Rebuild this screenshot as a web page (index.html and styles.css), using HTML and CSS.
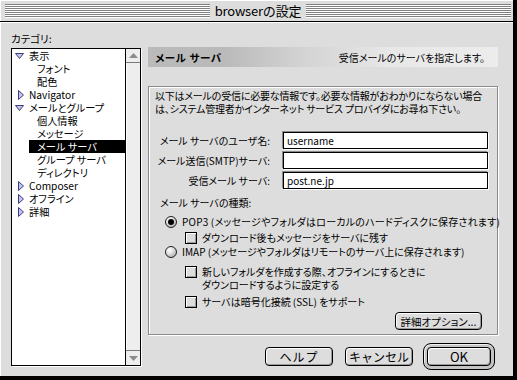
FILE: index.html
```html
<!DOCTYPE html>
<html lang="ja">
<head>
<meta charset="utf-8">
<title>browserの設定</title>
<link rel="stylesheet" href="styles.css">
</head>
<body>
<div class="window">
  <div class="titlebar">
    <div class="stripes"></div>
    <div class="title">browserの設定</div>
    <div class="stripes"></div>
  </div>
  <div class="content">
    <div class="left">
      <div class="cat-label">カテゴリ:</div>
      <div class="listbox">
        <div class="tree">
          <div class="row l0"><svg class="tri" width="10" height="10" viewBox="0 0 10 10"><polygon points="0.5,2.5 8.5,2.5 4.5,7.5"/></svg><span class="txt">表示</span></div>
          <div class="row l1"><span class="txt">フォント</span></div>
          <div class="row l1"><span class="txt">配色</span></div>
          <div class="row l0"><svg class="tri" width="10" height="10" viewBox="0 0 10 10"><polygon points="3.5,0.5 8.5,5 3.5,9.5"/></svg><span class="txt">Navigator</span></div>
          <div class="row l0"><svg class="tri" width="10" height="10" viewBox="0 0 10 10"><polygon points="0.5,2.5 8.5,2.5 4.5,7.5"/></svg><span class="txt">メールとグループ</span></div>
          <div class="row l1"><span class="txt">個人情報</span></div>
          <div class="row l1"><span class="txt">メッセージ</span></div>
          <div class="row l1 selected"><span class="txt">メール サーバ</span></div>
          <div class="row l1"><span class="txt">グループ サーバ</span></div>
          <div class="row l1"><span class="txt">ディレクトリ</span></div>
          <div class="row l0"><svg class="tri" width="10" height="10" viewBox="0 0 10 10"><polygon points="3.5,0.5 8.5,5 3.5,9.5"/></svg><span class="txt">Composer</span></div>
          <div class="row l0"><svg class="tri" width="10" height="10" viewBox="0 0 10 10"><polygon points="3.5,0.5 8.5,5 3.5,9.5"/></svg><span class="txt">オフライン</span></div>
          <div class="row l0"><svg class="tri" width="10" height="10" viewBox="0 0 10 10"><polygon points="3.5,0.5 8.5,5 3.5,9.5"/></svg><span class="txt">詳細</span></div>
        </div>
        <div class="vscroll">
          <div class="sb-btn up"><svg width="9" height="5" viewBox="0 0 9 5"><polygon points="4.5,0 9,5 0,5"/></svg></div>
          <div class="sb-track"></div>
          <div class="sb-btn down"><svg width="9" height="5" viewBox="0 0 9 5"><polygon points="0,0 9,0 4.5,5"/></svg></div>
        </div>
      </div>
    </div>
    <div class="right">
      <div class="panel-head">
        <span class="ph-title">メール サーバ</span>
        <span class="ph-desc">受信メールのサーバを指定します。</span>
      </div>
      <div class="group">
        <p class="intro">以下はメールの受信に必要な情報です。必要な情報がおわかりにならない場合<br>は、システム管理者かインターネット サービス プロバイダにお尋ね下さい。</p>
        <div class="fields">
          <span class="flabel">メール サーバのユーザ名:</span><div class="input">username</div>
          <span class="flabel">メール送信(SMTP)サーバ:</span><div class="input"></div>
          <span class="flabel">受信メール サーバ:</span><div class="input">post.ne.jp</div>
        </div>
        <div class="kind-label">メール サーバの種類:</div>
        <div class="opt radio-row r1"><span class="radio on"></span><span class="pop">POP3 (メッセージやフォルダはローカルのハードディスクに保存されます)</span></div>
        <div class="opt check-row c1"><span class="check"></span><span>ダウンロード後もメッセージをサーバに残す</span></div>
        <div class="opt radio-row r2"><span class="radio"></span><span>IMAP (メッセージやフォルダはリモートのサーバ上に保存されます)</span></div>
        <div class="opt check-row c2"><span class="check"></span><span>新しいフォルダを作成する際、オフラインにするときに<br>ダウンロードするように設定する</span></div>
        <div class="opt check-row c3"><span class="check"></span><span>サーバは暗号化接続 (SSL) をサポート</span></div>
        <div class="adv-row"><div class="btn adv">詳細オプション...</div></div>
      </div>
      <div class="buttons">
        <div class="btn help">ヘルプ</div>
        <div class="btn cancel">キャンセル</div>
        <div class="default-ring"><div class="btn ok">OK</div></div>
      </div>
    </div>
  </div>
</div>
</body>
</html>
```
FILE: styles.css
```css
* { box-sizing: border-box; margin: 0; padding: 0; }
html, body { width: 517px; height: 380px; overflow: hidden; background: #000; }
body {
  font-family: "Noto Sans CJK JP", "Noto Sans", sans-serif;
  font-size: 10px;
  color: #000;
  font-feature-settings: "palt";
  white-space: nowrap;
}
.window {
  width: 513px;
  height: 376px;
  background: #dddddd;
  display: flex;
  flex-direction: column;
}
.titlebar {
  height: 22px;
  border-bottom: 1px solid #000;
  display: flex;
  align-items: center;
  padding: 0 2px 0 5px;
  background: #dddddd;
  box-shadow: inset 1px 1px 0 #fff;
}
.stripes {
  flex: 1;
  height: 13px;
  background: repeating-linear-gradient(to bottom, #808080 0 1px, #ffffff 1px 2px);
  box-shadow: 0 1px 0 #fff;
}
.title {
  font-size: 13px;
  line-height: 21px;
  padding: 0 5px;
  font-feature-settings: normal;
  letter-spacing: -0.2px;
}
.content {
  flex: 1;
  display: flex;
  padding-left: 11px;
  box-shadow: inset 1px 1px 0 #fff;
}
.left { width: 130px; display: flex; flex-direction: column; }
.cat-label { margin-top: 10px; line-height: 14px; height: 14px; font-size: 10.5px; }
.listbox {
  margin-top: 2px;
  height: 318px;
  border: 1px solid #000;
  display: flex;
  box-shadow: 1px 1px 0 #fff;
}
.tree { flex: 1; background: #fff; }
.row { height: 13px; line-height: 13px; display: flex; align-items: center; font-size: 10.2px; }
.row.l0 { padding-left: 3px; }
.row.l0 .txt { margin-left: 4px; }
.row.l1 { margin-left: 17px; padding-left: 8px; }
.row.selected { background: #000; color: #fff; }
.tri { display: block; }
.tri polygon { fill: #c4c4f0; stroke: #3c3c7c; stroke-width: 1; stroke-linejoin: miter; }
.vscroll {
  width: 15px;
  border-left: 1px solid #000;
  background: #eeeeee;
  display: flex;
  flex-direction: column;
}
.sb-btn { display: flex; align-items: center; justify-content: center; background: #eeeeee; }
.sb-btn svg polygon { fill: #8c8c8c; }
.sb-btn.up { height: 14px; border-bottom: 1px solid #7a7a7a; }
.sb-btn.down { height: 15px; border-top: 1px solid #7a7a7a; }
.sb-track { flex: 1; box-shadow: inset 1px 0 0 #fff; }
.right { width: 350px; margin-left: 7px; display: flex; flex-direction: column; }
.panel-head {
  margin-top: 25px;
  height: 20px;
  display: flex;
  align-items: center;
  justify-content: space-between;
  padding: 0 13px 0 7px;
  background: linear-gradient(to right, #bababa 0, #bababa 22%, #d4d4d4 45%, #e8e8e8 70%, #ececec 100%);
}
.ph-title { font-weight: bold; font-size: 10.5px; letter-spacing: 0.6px; }
.group {
  margin-top: 19px;
  height: 249px;
  border: 1px solid #8a8a8a;
  box-shadow: inset 1px 1px 0 #fff, 1px 1px 0 #fff;
  padding-top: 2px;
  display: flex;
  flex-direction: column;
}
.intro { padding-left: 6px; line-height: 13px; letter-spacing: -0.2px; }
.fields {
  margin-top: 17px;
  display: grid;
  grid-template-columns: 121px 205px;
  grid-auto-rows: 17px;
  column-gap: 13px;
  row-gap: 3px;
}
.flabel { text-align: right; line-height: 17px; }
.input {
  background: #fff;
  border: 1px solid #000;
  box-shadow: -1px -1px 0 #8a8a8a, 1px 1px 0 #fff;
  padding-left: 3px;
  line-height: 15px;
}
.kind-label { margin-top: 7px; line-height: 14px; padding-left: 11px; }
.opt { display: flex; align-items: center; line-height: 14px; min-height: 14px; }
.pop { letter-spacing: 0.2px; }
.radio-row { padding-left: 16px; }
.radio-row .radio { margin-right: 5px; }
.check-row { padding-left: 36px; }
.check-row .check { margin-right: 5px; }
.r1 { margin-top: 5px; }
.c1 { margin-top: 2px; }
.c2 { margin-top: 6px; align-items: flex-start; line-height: 13px; }
.c2 .check { margin-top: 1px; }
.c3 { margin-top: 4px; }
.radio {
  width: 12px; height: 12px;
  border-radius: 50%;
  border: 1px solid #222;
  background: radial-gradient(circle at 35% 30%, #ffffff 0, #e4e4e4 35%, #9a9a9a 100%);
  position: relative;
  flex: none;
}
.radio.on::after {
  content: "";
  position: absolute;
  left: 2px; top: 2px;
  width: 6px; height: 6px;
  border-radius: 50%;
  background: #000;
}
.check {
  width: 12px; height: 12px;
  border: 1px solid #000;
  background: #dcdcdc;
  box-shadow: inset 1px 1px 0 #fff, inset -1px -1px 0 #9a9a9a;
  flex: none;
}
.adv-row { margin-top: 3px; display: flex; justify-content: flex-end; padding-right: 15px; }
.btn {
  border: 1px solid #000;
  border-radius: 4px;
  background: #dddddd;
  box-shadow: inset 1px 1px 0 #fff, inset -1px -1px 0 #9a9a9a;
  display: flex;
  align-items: center;
  justify-content: center;
}
.btn.adv { width: 87px; height: 18px; font-size: 10.5px; }
.buttons {
  margin-top: 8px;
  height: 27px;
  display: flex;
  justify-content: flex-end;
  align-items: center;
  padding-right: 3px;
}
.btn.help, .btn.cancel { width: 68px; height: 19px; font-size: 12px; font-feature-settings: normal; }
.btn.help { margin-right: 12px; letter-spacing: 1px; }
.btn.cancel { margin-right: 10px; }
.default-ring {
  border: 1px solid #000;
  border-radius: 8px;
  padding: 3px;
  background: #c4c4c4;
  box-shadow: inset 1px 1px 0 #eee;
}
.btn.ok { width: 64px; height: 19px; font-size: 13px; }
```
